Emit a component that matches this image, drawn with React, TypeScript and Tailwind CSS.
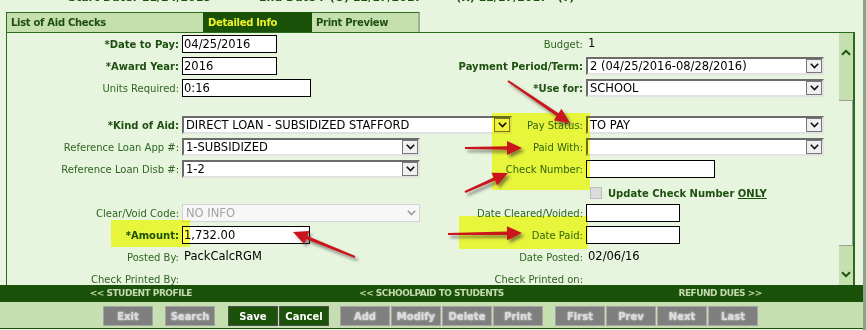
import React from 'react'

// ============================================
// AID CHECK - DETAILED INFO
// ============================================

const DARK = 'bg-[#1b5209]'

function Chevron({ color = '#111111' }: { color?: string }) {
  return (
    <svg width="9" height="6" viewBox="0 0 9 6">
      <path d="M0.8 0.8 L4.5 4.6 L8.2 0.8" fill="none" stroke={color} strokeWidth="1.6" />
    </svg>
  )
}

function TextBox({ w, value = '' }: { w: string; value?: string }) {
  return (
    <div className={`${w} h-[18px] border border-black bg-white text-[11.5px] leading-[16px] pl-[1px] text-black whitespace-nowrap overflow-hidden`}>
      {value}
    </div>
  )
}

function Select({ w, value = '', disabled = false }: { w: string; value?: string; disabled?: boolean }) {
  if (disabled) {
    return (
      <div className={`${w} h-[18px] flex items-center border border-[#d4d4d4] bg-[#f7f7f7]`}>
        <span className="flex-1 text-[11.5px] leading-[16px] pl-[3px] text-[#a3a3a3]">{value}</span>
        <span className="w-[16px] flex items-center justify-center">
          <Chevron color="#9a9a9a" />
        </span>
      </div>
    )
  }
  return (
    <div className={`${w} h-[18px] flex border-2 border-t-[#6b6b6b] border-l-[#6b6b6b] border-b-[#e2e2e2] border-r-[#e2e2e2] bg-white`}>
      <span className="flex-1 text-[11.5px] leading-[14px] pl-[2px] text-black whitespace-nowrap overflow-hidden">{value}</span>
      <span className="w-[16px] h-[14px] border border-[#777777] bg-[#f0f0f0] flex items-center justify-center">
        <Chevron />
      </span>
    </div>
  )
}

function Label({ text, bold = false, w }: { text: string; bold?: boolean; w: string }) {
  return (
    <div
      className={`${w} shrink-0 h-[18px] flex items-center justify-end text-[10px] whitespace-nowrap ${
        bold ? 'font-bold text-[#1d4f0f]' : 'text-[#2f6522]'
      }`}
    >
      {text}
    </div>
  )
}

interface RowProps {
  left?: string
  leftBold?: boolean
  leftField?: React.ReactNode
  right?: string
  rightBold?: boolean
  rightField?: React.ReactNode
}

function Row({ left = '', leftBold, leftField, right = '', rightBold, rightField }: RowProps) {
  return (
    <div className="flex h-[22px]">
      <div className="w-[413px] flex shrink-0">
        <Label text={left} bold={leftBold} w="w-[172px]" />
        <div className="ml-[3px] shrink-0">{leftField}</div>
      </div>
      <Label text={right} bold={rightBold} w="w-[163px]" />
      <div className="ml-[3px] shrink-0">{rightField}</div>
    </div>
  )
}

function Value({ text }: { text: string }) {
  return <div className="h-[18px] flex items-center pl-[2px] text-[11.5px] text-black">{text}</div>
}

function GrayBtn({ label }: { label: string }) {
  return (
    <div className="w-[50px] h-[20px] bg-[#7f7f7f] border border-[#a5a5a5] flex items-center justify-center text-[10px] font-bold text-[#dadada] [text-shadow:0_0_2px_#ffffff]">
      {label}
    </div>
  )
}

function GreenBtn({ label }: { label: string }) {
  return (
    <div className="w-[50px] h-[20px] bg-[#1b5209] border border-[#4d4d4d] flex items-center justify-center text-[10px] font-bold text-white">
      {label}
    </div>
  )
}

// arrow outline from tail to tip
function arrowPoints(x1: number, y1: number, x2: number, y2: number) {
  const shaft = 1.7
  const headLen = 15
  const headW = 7
  const dx = x2 - x1
  const dy = y2 - y1
  const len = Math.hypot(dx, dy)
  const ux = dx / len
  const uy = dy / len
  const px = -uy
  const py = ux
  const bx = x2 - ux * headLen
  const by = y2 - uy * headLen
  const pts = [
    [x1 + px * shaft * 0.6, y1 + py * shaft * 0.6],
    [bx + px * shaft, by + py * shaft],
    [bx + px * headW, by + py * headW],
    [x2, y2],
    [bx - px * headW, by - py * headW],
    [bx - px * shaft, by - py * shaft],
    [x1 - px * shaft * 0.6, y1 - py * shaft * 0.6],
  ]
  return pts.map((p) => p.map((n) => n.toFixed(1)).join(',')).join(' ')
}

const ARROWS: [number, number, number, number][] = [
  [508, 81, 570, 123],
  [465, 148, 522, 148],
  [465, 192, 508, 173],
  [448, 234, 522, 233],
  [355, 257, 293, 232],
]

export default function App() {
  return (
    <div className="relative w-[866px] h-[330px] overflow-hidden bg-[#e7f5de] border-r-[3px] border-[#8aa382] font-['DejaVu_Sans',Verdana,sans-serif]">
      {/* Top strip, mostly scrolled away */}
      <div className="h-[12px] overflow-hidden">
        <div className="flex mt-[-10px] text-[11px] font-bold text-[#1d4f0f] whitespace-nowrap">
          <span className="ml-[68px]">Start Date:</span>
          <span className="ml-[5px]">11/24/2015</span>
          <span className="ml-[48px]">End Date :</span>
          <span className="ml-[6px]">(O) 12/17/2017</span>
          <span className="ml-[34px]">(R) 12/17/2017</span>
          <span className="ml-[10px]">(?)</span>
        </div>
      </div>

      {/* Tabs */}
      <div className="flex h-[20px] pl-[6px]">
        <div className="w-[197px] bg-[#c5dfae] border-t border-l border-[#2c6b1d] flex items-center pl-[4px] text-[10px] font-bold text-[#1d4f0f] tracking-[-0.3px]">
          List of Aid Checks
        </div>
        <div className={`w-[109px] ${DARK} flex items-center pl-[5px] text-[10px] font-bold text-[#ecf52c] tracking-[-0.3px]`}>
          Detailed Info
        </div>
        <div className="w-[108px] bg-[#c5dfae] border-t border-r-2 border-[#2c6b1d] border-r-[#9bb08f] flex items-center pl-[4px] text-[10px] font-bold text-[#1d4f0f] tracking-[-0.3px]">
          Print Preview
        </div>
      </div>

      {/* Panel */}
      <div className="ml-[6px] w-[849px] h-[253px] border-l border-t border-r-2 border-[#2c6b1d] flex overflow-hidden">
        <div className="flex-1 pt-[2px]">
          <Row
            left="*Date to Pay:"
            leftBold
            leftField={<TextBox w="w-[95px]" value="04/25/2016" />}
            right="Budget:"
            rightField={<Value text="1" />}
          />
          <Row
            left="*Award Year:"
            leftBold
            leftField={<TextBox w="w-[95px]" value="2016" />}
            right="Payment Period/Term:"
            rightBold
            rightField={<Select w="w-[238px]" value="2 (04/25/2016-08/28/2016)" />}
          />
          <Row
            left="Units Required:"
            leftField={<TextBox w="w-[129px]" value="0:16" />}
            right="*Use for:"
            rightBold
            rightField={<Select w="w-[238px]" value="SCHOOL" />}
          />
          <div className="h-[15px]" />
          <Row
            left="*Kind of Aid:"
            leftBold
            leftField={<Select w="w-[330px]" value="DIRECT LOAN - SUBSIDIZED STAFFORD" />}
            right="Pay Status:"
            rightField={<Select w="w-[238px]" value="TO PAY" />}
          />
          <Row
            left="Reference Loan App #:"
            leftField={<Select w="w-[238px]" value="1-SUBSIDIZED" />}
            right="Paid With:"
            rightField={<Select w="w-[238px]" />}
          />
          <Row
            left="Reference Loan Disb #:"
            leftField={<Select w="w-[238px]" value="1-2" />}
            right="Check Number:"
            rightField={<TextBox w="w-[129px]" />}
          />
          <Row
            rightField={
              <div className="h-[18px] flex items-center pt-[4px]">
                <span className="ml-[4px] w-[12px] h-[12px] bg-[#dcdcdc] border border-[#bdbdbd]" />
                <span className="ml-[6px] text-[10px] font-bold text-[#1d4f0f] whitespace-nowrap">
                  Update Check Number <span className="underline">ONLY</span>
                </span>
              </div>
            }
          />
          <Row
            left="Clear/Void Code:"
            leftField={<Select w="w-[238px]" value="NO INFO" disabled />}
            right="Date Cleared/Voided:"
            rightField={<TextBox w="w-[94px]" />}
          />
          <Row
            left="*Amount:"
            leftBold
            leftField={<TextBox w="w-[128px]" value="1,732.00" />}
            right="Date Paid:"
            rightField={<TextBox w="w-[94px]" />}
          />
          <Row
            left="Posted By:"
            leftField={<Value text="PackCalcRGM" />}
            right="Date Posted:"
            rightField={<Value text="02/06/16" />}
          />
          <Row left="Check Printed By:" right="Check Printed on:" />
        </div>

        {/* Scrollbar */}
        <div className="w-[14px] shrink-0 flex flex-col bg-[#c5dfae]">
          <div className="h-[67px] flex justify-center pt-[16px]">
            <svg width="10" height="7" viewBox="0 0 10 7">
              <path d="M1 5.8 L5 1.8 L9 5.8" fill="none" stroke="#1d4f0f" strokeWidth="2" />
            </svg>
          </div>
          <div className="h-[146px] bg-[#e7f5de] border-t border-r border-b border-[#9d9d9d]" />
          <div className="flex-1 flex justify-center items-end pb-[7px]">
            <svg width="10" height="7" viewBox="0 0 10 7">
              <path d="M1 1.2 L5 5.2 L9 1.2" fill="none" stroke="#1d4f0f" strokeWidth="2" />
            </svg>
          </div>
        </div>
      </div>

      {/* Navigation bar */}
      <div className={`h-[17px] ${DARK} grid grid-cols-3 items-center text-[9px] font-bold tracking-[-0.5px] text-[#c4dbae] text-center whitespace-nowrap`}>
        <span className="pr-[6px]">&lt;&lt; STUDENT PROFILE</span>
        <span>&lt;&lt; SCHOOLPAID TO STUDENTS</span>
        <span className="pl-[2px]">REFUND DUES &gt;&gt;</span>
      </div>

      {/* Buttons */}
      <div className="h-[27px] bg-[#c6dfb0] border-b border-[#1b5209] flex items-start pt-[4px] pl-[103px]">
        <GrayBtn label="Exit" />
        <div className="ml-[12px]">
          <GrayBtn label="Search" />
        </div>
        <div className="ml-[13px] flex gap-[1px]">
          <GreenBtn label="Save" />
          <GreenBtn label="Cancel" />
        </div>
        <div className="ml-[11px] flex gap-[1px]">
          <GrayBtn label="Add" />
          <GrayBtn label="Modify" />
          <GrayBtn label="Delete" />
          <GrayBtn label="Print" />
        </div>
        <div className="ml-[12px] flex gap-[1px]">
          <GrayBtn label="First" />
          <GrayBtn label="Prev" />
          <GrayBtn label="Next" />
          <GrayBtn label="Last" />
        </div>
      </div>

      {/* Highlighter marks */}
      <div className="absolute left-[111px] top-[220px] w-[79px] h-[27px] bg-[#ffff43] mix-blend-multiply pointer-events-none" />
      <div className="absolute left-[492px] top-[113px] w-[98px] h-[77px] bg-[#ffff43] mix-blend-multiply pointer-events-none" />
      <div className="absolute left-[459px] top-[216px] w-[129px] h-[33px] bg-[#ffff43] mix-blend-multiply pointer-events-none" />

      {/* Red arrows */}
      <svg className="absolute left-0 top-0 pointer-events-none" width="866" height="330" viewBox="0 0 866 330">
        <defs>
          <filter id="shadow" x="-20%" y="-20%" width="140%" height="160%">
            <feDropShadow dx="2.5" dy="3" stdDeviation="1.6" floodColor="#333333" floodOpacity="0.55" />
          </filter>
        </defs>
        {ARROWS.map(([x1, y1, x2, y2], i) => (
          <polygon key={i} points={arrowPoints(x1, y1, x2, y2)} fill="#c8141c" filter="url(#shadow)" />
        ))}
      </svg>
    </div>
  )
}
